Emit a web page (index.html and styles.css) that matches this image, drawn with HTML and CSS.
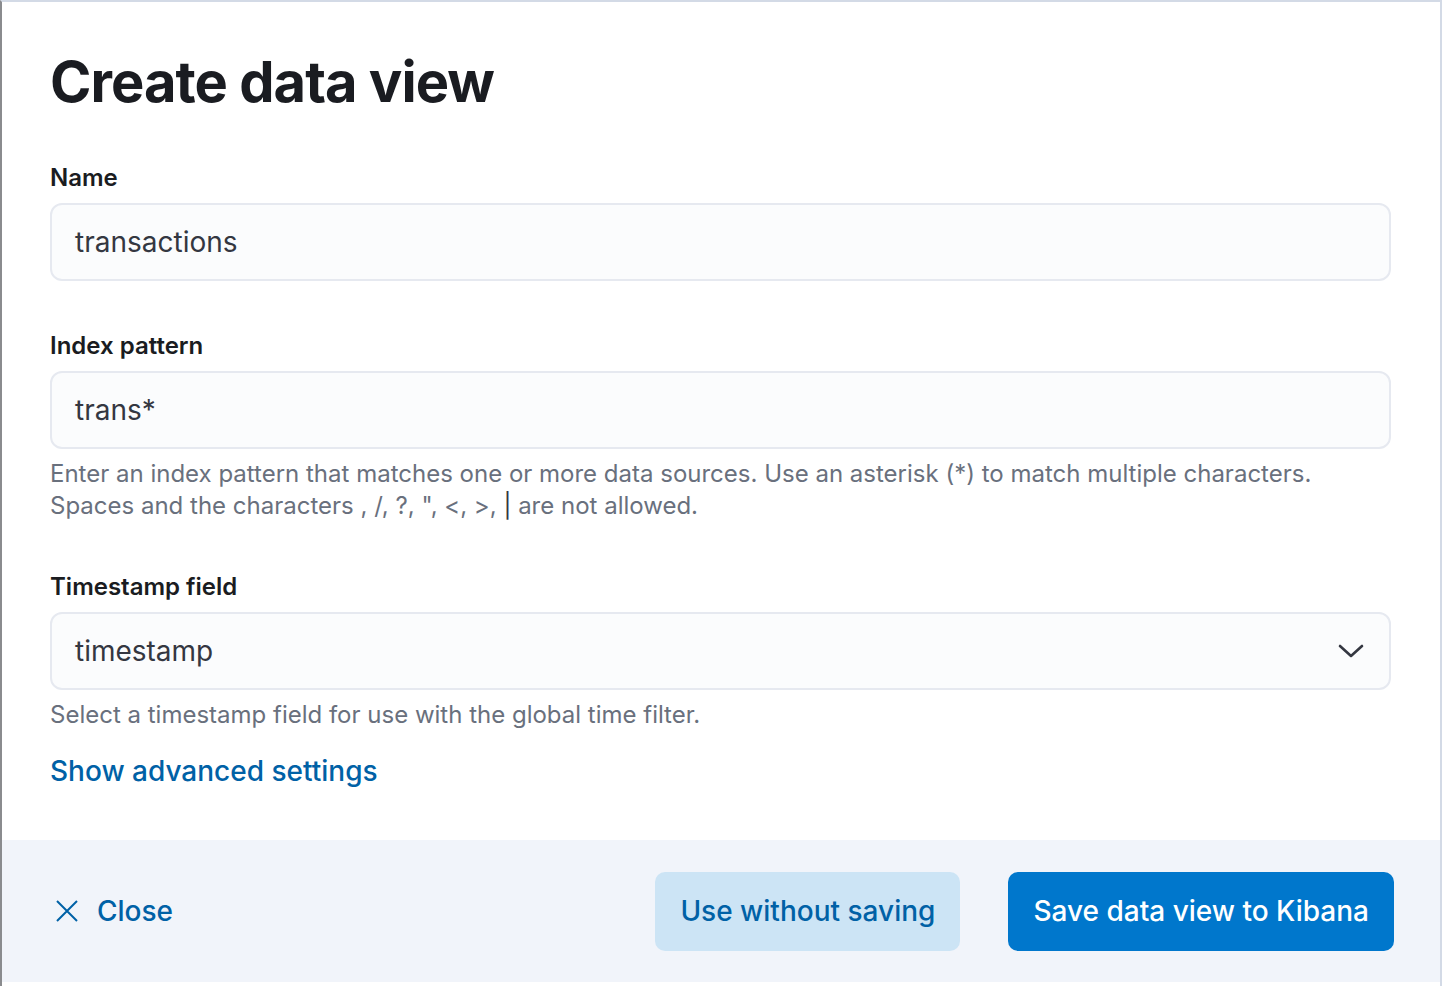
FILE: index.html
```html
<!DOCTYPE html>
<html lang="en">
<head>
    <meta charset="UTF-8">
    <title>Create data view</title>
    <link rel="stylesheet" href="styles.css">
</head>
<body>
    <div class="flyout">
        <div class="flyout-body">
            <h1 class="title">Create data view</h1>

            <div class="form-row">
                <label class="form-label">Name</label>
                <div class="field">transactions</div>
            </div>

            <div class="form-row">
                <label class="form-label">Index pattern</label>
                <div class="field">trans*</div>
                <div class="help-text">
                    Enter an index pattern that matches one or more data sources. Use an asterisk (*) to match multiple characters.<br>
                    Spaces and the characters , /, ?, ", &lt;, &gt;, <span class="pipe">|</span> are not allowed.
                </div>
            </div>

            <div class="form-row">
                <label class="form-label">Timestamp field</label>
                <div class="field field-select">
                    <span>timestamp</span>
                    <svg class="chevron" width="28" height="28" viewBox="0 0 28 28">
                        <path d="M3 9 L14 19 L25 9" fill="none" stroke="#343741" stroke-width="2.6" stroke-linecap="round" stroke-linejoin="round"/>
                    </svg>
                </div>
                <div class="help-text">Select a timestamp field for use with the global time filter.</div>
            </div>

            <a href="#" class="link-advanced">Show advanced settings</a>
        </div>

        <div class="flyout-footer">
            <button class="btn-close">
                <svg width="24" height="24" viewBox="0 0 24 24">
                    <path d="M2 2 L22 22 M22 2 L2 22" fill="none" stroke="#0061a6" stroke-width="2"/>
                </svg>
                <span>Close</span>
            </button>
            <div class="footer-actions">
                <button class="btn btn-secondary">Use without saving</button>
                <button class="btn btn-primary">Save data view to Kibana</button>
            </div>
        </div>
    </div>
</body>
</html>
```

FILE: styles.css
```css
body {
    margin: 0;
    padding: 0;
    background-color: #ffffff;
    font-family: Inter, "Noto Sans", sans-serif;
    color: #1a1c21;
}

.flyout {
    height: 986px;
    box-sizing: border-box;
    border-top: 2px solid #d3dae6;
    border-left: 2px solid #8a8b8e;
    border-right: 2px solid #d3dae6;
    padding-bottom: 4px;
    display: flex;
    flex-direction: column;
}

.flyout-body {
    flex: 1;
    padding: 46px 49px 0 48px;
}

.title {
    margin: 0;
    font-size: 56px;
    line-height: 68px;
    font-weight: 700;
    letter-spacing: -0.95px;
    color: #1a1c21;
}

.form-row {
    margin-top: 46px;
}

.form-row + .form-row {
    margin-top: 49px;
}

.form-label {
    display: block;
    font-size: 24px;
    line-height: 32px;
    font-weight: 600;
    color: #1a1c21;
}

.field {
    margin-top: 9px;
    height: 78px;
    box-sizing: border-box;
    background-color: #fbfcfd;
    border: 2px solid #e6e9f0;
    border-radius: 12px;
    padding: 0 23px;
    display: flex;
    align-items: center;
    font-size: 28px;
    color: #343741;
}

.field-select {
    justify-content: space-between;
    padding-right: 24px;
}

.help-text {
    margin-top: 9px;
    font-size: 24px;
    line-height: 32px;
    color: #69707d;
}

.pipe {
    color: #343741;
}

.link-advanced {
    display: inline-block;
    margin-top: 22px;
    font-size: 28px;
    line-height: 36px;
    font-weight: 500;
    color: #0061a6;
    text-decoration: none;
}

.flyout-footer {
    height: 142px;
    background-color: #f1f4fa;
    display: flex;
    align-items: center;
    justify-content: space-between;
    padding: 0 46px 0 53px;
}

.btn-close {
    display: flex;
    align-items: center;
    gap: 18px;
    background: none;
    border: none;
    padding: 0;
    font-family: inherit;
    font-size: 28px;
    font-weight: 500;
    color: #0061a6;
    cursor: pointer;
}

.footer-actions {
    display: flex;
    gap: 48px;
}

.btn {
    height: 79px;
    border: none;
    border-radius: 10px;
    padding: 0 25px;
    font-family: inherit;
    font-size: 28px;
    font-weight: 500;
    cursor: pointer;
}

.btn-secondary {
    background-color: #cce4f5;
    color: #0061a6;
}

.btn-primary {
    background-color: #0077cc;
    color: #ffffff;
}
```
